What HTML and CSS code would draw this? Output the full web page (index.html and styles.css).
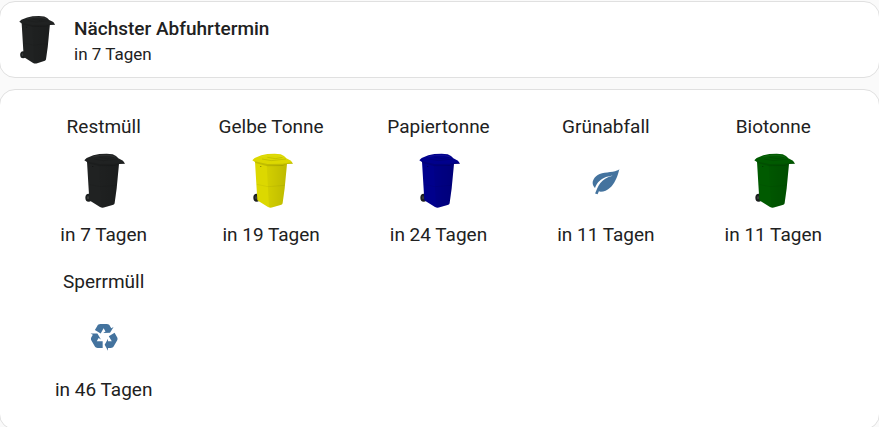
FILE: index.html
```html
<!DOCTYPE html>
<html lang="de">
<head>
<meta charset="utf-8">
<meta name="viewport" content="width=device-width, initial-scale=1">
<title>Abfuhrtermine</title>
<link rel="stylesheet" href="styles.css">
</head>
<body>
<svg class="defs" aria-hidden="true">
  <defs>
    <linearGradient id="shade" x1="0" x2="1" y1="0" y2="0">
      <stop offset="0" stop-color="#000" stop-opacity=".04"/>
      <stop offset="1" stop-color="#000" stop-opacity=".14"/>
    </linearGradient>
  </defs>
  <symbol id="bin" viewBox="30 24 126 168">
    <ellipse cx="44" cy="158" rx="10" ry="12" fill="#1c1f1f"/>
    <ellipse cx="42" cy="158" rx="3" ry="5" fill="#3b3d3d"/>
    <path fill="currentColor" d="M39 50 46 166 54 171 78 186Q85 190 92 187L118 179Q122 177 122 173L128 130 135 56Z"/>
    <path fill="url(#shade)" d="M74 60 135 56 128 130 122 173Q122 177 118 179L92 187Q86 189 81 187Z"/>
    <path fill="none" stroke="#000" stroke-opacity=".08" stroke-width="2" d="M44 118 78 125 128 121"/>
    <path fill="currentColor" d="M31 46 38 39 58 31 76 27 98 26 116 28 126 33 133 40 147 47 153 56 134 57 122 60 76 61 40 52Z"/>
    <path fill="#000" fill-opacity=".12" d="M38 49 76 57 122 56 150 52 153 56 134 57 122 63 76 64 40 54Z"/>
    <path fill="none" stroke="#000" stroke-opacity=".16" stroke-width="2" d="M60 42 88 47 132 42M76 37 100 41 122 37"/>
    <path fill="none" stroke="#fff" stroke-opacity=".1" stroke-width="2" d="M58 35 80 31 106 31 124 36"/>
    <path fill="#000" fill-opacity=".3" d="M54 63H58V66H54Z"/>
  </symbol>
</svg>

<main class="dashboard">
  <section class="card next">
    <svg class="bin black" role="img" aria-label="Restmüll"><use href="#bin"/></svg>
    <div class="next-text">
      <h1 class="next-title">Nächster Abfuhrtermin</h1>
      <p class="next-state">in 7 Tagen</p>
    </div>
  </section>

  <section class="card glance">
    <div class="entity">
      <span>Restmüll</span>
      <div class="picture"><svg class="bin black" aria-hidden="true"><use href="#bin"/></svg></div>
      <span>in 7 Tagen</span>
    </div>
    <div class="entity">
      <span>Gelbe Tonne</span>
      <div class="picture"><svg class="bin yellow" aria-hidden="true"><use href="#bin"/></svg></div>
      <span>in 19 Tagen</span>
    </div>
    <div class="entity">
      <span>Papiertonne</span>
      <div class="picture"><svg class="bin blue" aria-hidden="true"><use href="#bin"/></svg></div>
      <span>in 24 Tagen</span>
    </div>
    <div class="entity">
      <span>Grünabfall</span>
      <div class="picture"><svg class="icon" viewBox="0 0 24 24" aria-hidden="true"><path d="M17,8C8,10 5.9,16.17 3.82,21.34L5.71,22L6.66,19.7C7.14,19.87 7.64,20 8,20C19,20 22,3 22,3C21,5 14,5.25 9,6.25C4,7.25 2,11.5 2,13.5C2,15.5 3.75,17.25 3.75,17.25C7,8 17,8 17,8Z"/></svg></div>
      <span>in 11 Tagen</span>
    </div>
    <div class="entity">
      <span>Biotonne</span>
      <div class="picture"><svg class="bin green" aria-hidden="true"><use href="#bin"/></svg></div>
      <span>in 11 Tagen</span>
    </div>
    <div class="entity">
      <span>Sperrmüll</span>
      <div class="picture"><svg class="icon" viewBox="0 0 24 24" aria-hidden="true"><path d="M21.82,15.42L19.32,19.75C18.83,20.61 17.92,21.06 17,21H15V23L12.5,18.5L15,14V16H17.82L15.6,12.15L19.93,9.65L21.73,12.77C22.25,13.54 22.32,14.57 21.82,15.42M9.21,3.06H14.21C15.19,3.06 16.04,3.63 16.45,4.45L17.45,6.19L19.18,5.19L16.54,9.6L11.39,9.69L13.12,8.69L11.71,6.24L9.5,10.09L5.16,7.59L6.96,4.47C7.37,3.64 8.22,3.06 9.21,3.06M5.05,19.76L2.55,15.43C2.06,14.58 2.13,13.56 2.64,12.79L3.64,11.06L1.91,10.06L7.05,10.14L9.7,14.56L7.97,13.56L6.56,16H11V21H7.4C6.47,21.07 5.55,20.61 5.05,19.76Z"/></svg></div>
      <span>in 46 Tagen</span>
    </div>
  </section>
</main>
</body>
</html>
```
FILE: styles.css
```css
* {
  box-sizing: border-box;
}

html {
  overflow: hidden;
}

body {
  margin: 0;
  background: #fafafa;
  color: #212121;
  font-family: Roboto, "Noto Sans", sans-serif;
}

.defs {
  position: absolute;
  width: 0;
  height: 0;
}

.dashboard {
  display: flex;
  flex-direction: column;
  gap: 11px;
  margin: 0 -1px;
  padding-top: 1px;
}

.card {
  background: #fff;
  border: 1px solid #e0e0e0;
  border-radius: 16px;
}

.next {
  display: flex;
  align-items: center;
  gap: 18px;
  padding: 12px 19px 11px;
}

.next .bin {
  width: 37px;
  height: 50px;
}

.next-text {
  padding-top: 2px;
}

.next-title,
.next-state {
  margin: 0;
}

.next-title {
  font-size: 19px;
  font-weight: 500;
  line-height: 26px;
}

.next-state {
  font-size: 17px;
  line-height: 24px;
}

.glance {
  display: grid;
  grid-template-columns: repeat(5, 1fr);
  row-gap: 19px;
  padding: 23px 22px 25px 20px;
}

.entity {
  display: flex;
  flex-direction: column;
  align-items: center;
  font-size: 19px;
  line-height: 28px;
}

.picture {
  display: flex;
  align-items: center;
  height: 80px;
}

.picture .bin {
  margin-left: 3px;
}

.bin {
  width: 42px;
  height: 56px;
}

.icon {
  width: 32px;
  height: 32px;
  fill: #44739e;
}

.black {
  color: #202222;
}

.yellow {
  color: #dcd800;
}

.blue {
  color: #00008c;
}

.green {
  color: #005a00;
}
```
